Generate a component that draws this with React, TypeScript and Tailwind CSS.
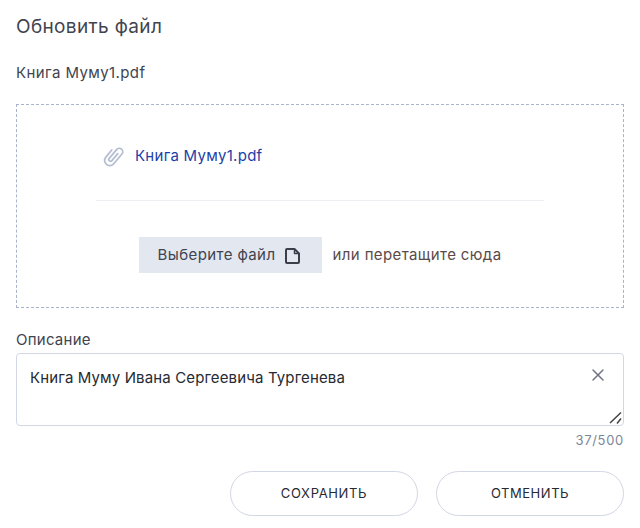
import { X } from "lucide-react";

const App = () => {
  return (
    <div className="w-[640px] h-[528px] overflow-hidden bg-white px-4 font-['Inter',sans-serif] text-[#3f4450]">
      <h2 className="pt-[16px] text-[19px] leading-[22px] font-normal tracking-[0.35px] text-[#3f4450]">Обновить файл</h2>
      <p className="mt-[25px] text-[15px] leading-[20px] tracking-[0.4px]">Книга Муму1.pdf</p>

      <div className="mt-[21px] h-[204px] border border-dashed border-[#a9b3cb] px-[79px] flex flex-col">
        <div className="mt-[41px] flex h-[20px] items-center gap-[12px] pl-[9px]">
          <svg className="overflow-visible" width="18" height="20" viewBox="0 0 18 20" fill="none" stroke="#b4bdd1" strokeWidth="1.500" strokeLinecap="round" strokeLinejoin="round">
            <path transform="translate(8.500 10) rotate(40) scale(1.150)" d="M-4.500 -3V5a4.500 4.500 0 0 0 9 0V-6a3 3 0 0 0-6 0V4a1.500 1.500 0 0 0 3 0V-4" />
          </svg>
          <a className="text-[15px] leading-[20px] tracking-[0.27px] text-[#1d3fa8]">Книга Муму1.pdf</a>
        </div>
        <div className="mt-[34px] h-px bg-[#edeff3]" />
        <div className="mt-[36px] flex items-center justify-center gap-[11px]">
          <button className="flex h-[36px] w-[183px] items-center gap-[9px] bg-[#e3e7f0] pl-[19px] text-[15px] tracking-[0.4px] text-[#3f4450]">
            Выберите файл
            <svg width="20" height="20" viewBox="0 0 20 20" fill="none" stroke="#3a3f4a" strokeWidth="2" strokeLinejoin="round">
              <path d="M3 4h7.500l4.500 4.500V17a1 1 0 0 1-1 1H3a1 1 0 0 1-1-1V5a1 1 0 0 1 1-1z" />
              <path d="M10.500 4.500V8.500H14.500" strokeWidth="1.500" />
            </svg>
          </button>
          <span className="text-[15px] tracking-[0.38px] text-[#5a4a48]">или перетащите сюда</span>
        </div>
      </div>

      <label className="mt-[22px] block text-[15px] leading-[20px] tracking-[0.25px]">Описание</label>
      <div className="relative mt-[3px] h-[73px] rounded-[4px] border border-[#d3d7e3] px-[13px] pt-[14px]">
        <p className="text-[15px] leading-[20px] tracking-[0.13px] text-[#262a33]">Книга Муму Ивана Сергеевича Тургенева</p>
        <X className="absolute right-[15px] top-[11px] h-[20px] w-[20px] text-[#6f7583]" strokeWidth={1.8} />
        <svg className="absolute bottom-[1px] right-[1px]" width="14" height="14" viewBox="0 0 14 14" stroke="#444" strokeWidth="1.500" fill="none">
          <path d="M2 13L13 2.500M9 13.500l4-5" />
        </svg>
      </div>
      <div className="mt-[5px] text-right text-[13px] leading-[18px] tracking-[0.7px] text-[#7c8699]">37/500</div>

      <div className="mt-[22px] flex justify-end gap-[18px]">
        <button className="h-[45px] w-[188px] rounded-full border border-[#d3d7e3] text-[13px] tracking-[0.65px] text-[#262a33]">СОХРАНИТЬ</button>
        <button className="h-[45px] w-[188px] rounded-full border border-[#d3d7e3] text-[13px] tracking-[0.55px] text-[#262a33]">ОТМЕНИТЬ</button>
      </div>
    </div>
  );
};

export default App;
